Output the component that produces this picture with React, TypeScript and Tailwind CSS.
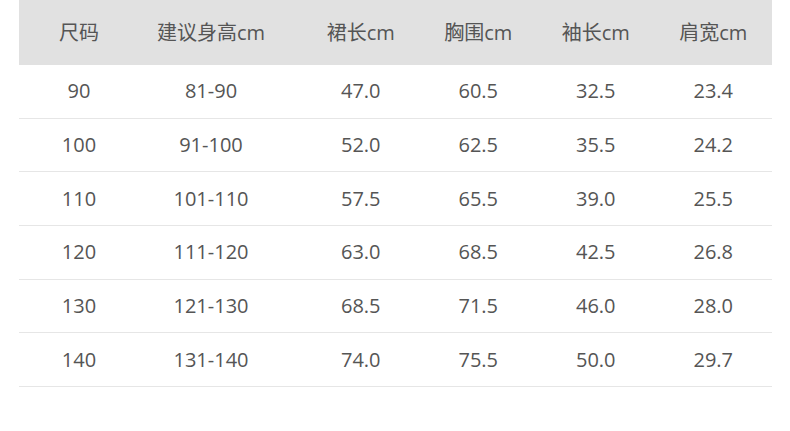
import React from "react";

const headers = ["尺码", "建议身高cm", "裙长cm", "胸围cm", "袖长cm", "肩宽cm"];
const rows = [
  ["90", "81-90", "47.0", "60.5", "32.5", "23.4"],
  ["100", "91-100", "52.0", "62.5", "35.5", "24.2"],
  ["110", "101-110", "57.5", "65.5", "39.0", "25.5"],
  ["120", "111-120", "63.0", "68.5", "42.5", "26.8"],
  ["130", "121-130", "68.5", "71.5", "46.0", "28.0"],
  ["140", "131-140", "74.0", "75.5", "50.0", "29.7"],
];

const pad = ["pr-[6px]", "pr-[9px]", "pl-[16px]", "", "", ""];

export default function App() {
  return (
    <div
      className="w-[790px] h-[431px] bg-white pl-[19px] pr-[18px] text-[#555555] text-[20px]"
      style={{ fontFamily: '"Open Sans", "Noto Sans CJK SC", sans-serif' }}
    >
      <div className="grid grid-cols-[126px_141px_133.5px_117.5px_117.5px_117.5px] h-[65px] bg-[#e1e1e1] items-center">
        {headers.map((h, i) => (
          <div key={h} className={`text-center ${pad[i]}`}>
            {h}
          </div>
        ))}
      </div>
      {rows.map((r) => (
        <div
          key={r[0]}
          className="grid grid-cols-[126px_141px_133.5px_117.5px_117.5px_117.5px] h-[53.67px] border-b border-[#e6e6e6] items-center"
        >
          {r.map((c, i) => (
            <div key={i} className={`text-center ${pad[i]}`}>
              {c}
            </div>
          ))}
        </div>
      ))}
    </div>
  );
}
